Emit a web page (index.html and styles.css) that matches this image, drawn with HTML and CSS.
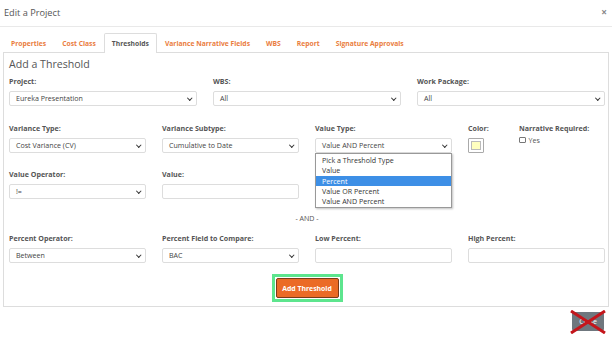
FILE: index.html
```html
<!DOCTYPE html>
<html>
<head>
<meta charset="utf-8">
<link rel="stylesheet" href="styles.css">
</head>
<body>
<div class="modal">
  <div class="modal-header">
    <span class="modal-title">Edit a Project</span>
    <span class="close-x">×</span>
  </div>
  <div class="modal-body">
    <ul class="tabs">
      <li class="tab">Properties</li>
      <li class="tab">Cost Class</li>
      <li class="tab active">Thresholds</li>
      <li class="tab">Variance Narrative Fields</li>
      <li class="tab">WBS</li>
      <li class="tab">Report</li>
      <li class="tab">Signature Approvals</li>
    </ul>
    <div class="panel">
      <h2 class="heading">Add a Threshold</h2>
      <div class="row row-3">
        <div class="group"><label class="lbl">Project:</label><div class="select">Eureka Presentation<span class="chev"></span></div></div>
        <div class="group"><label class="lbl">WBS:</label><div class="select">All<span class="chev"></span></div></div>
        <div class="group"><label class="lbl">Work Package:</label><div class="select">All<span class="chev"></span></div></div>
      </div>
      <div class="row row-5">
        <div class="group"><label class="lbl">Variance Type:</label><div class="select">Cost Variance (CV)<span class="chev"></span></div></div>
        <div class="group"><label class="lbl">Variance Subtype:</label><div class="select">Cumulative to Date<span class="chev"></span></div></div>
        <div class="group dd-host"><label class="lbl">Value Type:</label><div class="select">Value AND Percent<span class="chev"></span></div>
          <ul class="dropdown">
            <li class="opt">Pick a Threshold Type</li>
            <li class="opt">Value</li>
            <li class="opt selected">Percent</li>
            <li class="opt">Value OR Percent</li>
            <li class="opt">Value AND Percent</li>
          </ul>
        </div>
        <div class="group"><label class="lbl">Color:</label><div class="swatch"><div class="swatch-fill"></div></div></div>
        <div class="group"><label class="lbl">Narrative Required:</label><div class="check"><span class="box"></span>Yes</div></div>
      </div>
      <div class="row row-4 row-a">
        <div class="group"><label class="lbl">Value Operator:</label><div class="select">!=<span class="chev"></span></div></div>
        <div class="group"><label class="lbl">Value:</label><div class="input"></div></div>
      </div>
      <div class="and">- AND -</div>
      <div class="row row-4">
        <div class="group"><label class="lbl">Percent Operator:</label><div class="select">Between<span class="chev"></span></div></div>
        <div class="group"><label class="lbl">Percent Field to Compare:</label><div class="select">BAC<span class="chev"></span></div></div>
        <div class="group"><label class="lbl">Low Percent:</label><div class="input"></div></div>
        <div class="group"><label class="lbl">High Percent:</label><div class="input"></div></div>
      </div>
      <div class="actions"><div class="highlight"><button class="btn-add">Add Threshold</button></div></div>
    </div>
  </div>
  <div class="modal-footer">
    <div class="close-wrap">
      <button class="btn-close">Close</button>
      <svg class="cross" width="38" height="24" viewBox="0 0 38 24"><path d="M2 1 L36 23 M36 1 L2 23" stroke="#c4161c" stroke-width="3" fill="none"/></svg>
    </div>
  </div>
</div>
</body>
</html>
```

FILE: styles.css
```css
* { box-sizing: border-box; }
html, body { margin: 0; padding: 0; background: #fff; }
body { font-family: "Open Sans", "DejaVu Sans", sans-serif; color: #555; width: 612px; height: 345px; overflow: hidden; }

.modal-header { height: 27px; border-bottom: 1px solid #e9e9e9; display: flex; align-items: center; justify-content: space-between; padding: 0 5px 2px 4px; }
.modal-title { font-size: 9.2px; color: #555; }
.close-x { font-size: 10px; color: #888; font-weight: bold; }

.modal-body { padding: 6px 3px 0 3px; }
.tabs { list-style: none; margin: 0; padding: 0; display: flex; height: 19px; position: relative; z-index: 1; }
.tab { font-size: 6.75px; font-weight: 700; color: #ea7d3e; padding: 0 7px; line-height: 19px; border: 1px solid transparent; border-bottom: none; border-radius: 2px 2px 0 0; }
.tab.active { color: #555; background: #fff; border-color: #ddd; height: 20px; }

.panel { border: 1px solid #ddd; height: 255px; padding: 0 3px 0 5px; }
.heading { font-size: 10.6px; font-weight: 400; color: #555; margin: 4px 0 0 0; line-height: 15px; }

.row { display: grid; column-gap: 16px; }
.row-3 { grid-template-columns: repeat(3, 1fr); margin-top: 4px; }
.row-5 { grid-template-columns: 137px 137px 137px 35px 86px; margin-top: 17px; }
.row-4 { grid-template-columns: repeat(4, 137px); margin-top: 17px; }
.row-a { margin-top: 16px; }

.group { position: relative; }
.lbl { display: block; font-size: 7.1px; font-weight: 700; color: #555; line-height: 10px; height: 10px; margin-bottom: 5px; }
.select, .input { height: 15px; border: 1px solid #ddd; border-radius: 2px; background: #fff; font-size: 7.1px; color: #444; line-height: 13px; padding: 0 6px; position: relative; }
.chev { position: absolute; right: 5px; top: 4px; width: 3.5px; height: 3.5px; border-right: 1.3px solid #333; border-bottom: 1.3px solid #333; transform: rotate(45deg); }

.dropdown { position: absolute; left: 0; top: 30px; width: 137px; margin: 0; padding: 1px 0; list-style: none; background: #fff; border: 1px solid #999; box-shadow: 1px 1px 2px rgba(0,0,0,0.25); z-index: 5; }
.opt { font-size: 7.1px; color: #333; line-height: 10.3px; padding: 0 6px; }
.opt.selected { background: #3d8fe6; color: #fff; }

.swatch { width: 16px; height: 15px; border: 1px solid #aaa; border-radius: 1px; padding: 2px; background: #fff; }
.swatch-fill { width: 100%; height: 100%; background: #ffffbf; border: 1px solid #bbb; }
.check { font-size: 7.1px; color: #555; display: flex; align-items: center; height: 10px; margin-top: -3px; }
.box { width: 6.5px; height: 6.5px; border: 1px solid #777; border-radius: 1px; margin-right: 3px; }

.and { text-align: center; font-size: 7.1px; color: #555; line-height: 10px; margin-top: 14px; margin-bottom: -7px; }

.actions { display: flex; justify-content: center; margin-top: 11px; }
.highlight { border: 3px solid #5de58e; padding: 1px; }
.btn-add { display: block; font-family: "Open Sans", sans-serif; font-size: 6.9px; font-weight: 700; color: #fff; background: #eb6b26; border: 1px solid #7a3a18; border-radius: 2px; width: 63px; height: 20px; padding: 0; }

.modal-footer { display: flex; justify-content: flex-end; padding: 5px 8px 0 0; }
.close-wrap { position: relative; }
.btn-close { font-family: "Open Sans", sans-serif; font-size: 7px; color: #fff; background: #6f777e; border: none; border-radius: 2px; width: 32px; height: 19px; padding: 0; display: block; }
.cross { position: absolute; left: -3px; top: -2px; }
```
